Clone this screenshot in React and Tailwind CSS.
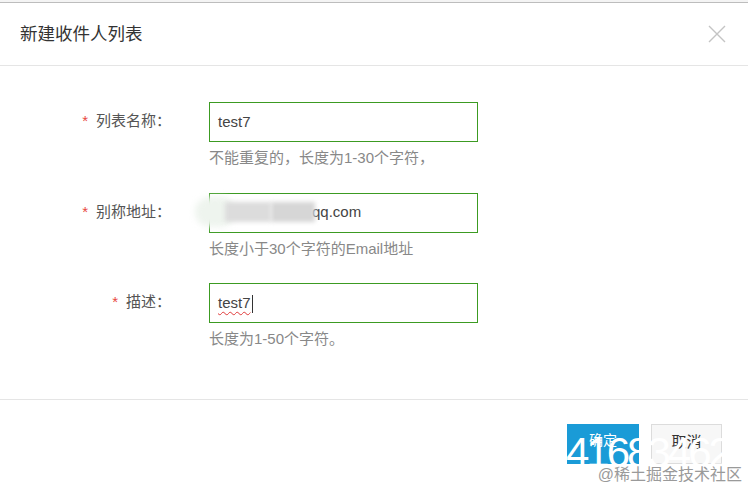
const fields = [
  { label: "列表名称：", value: "test7", help: "不能重复的，长度为1-30个字符，" },
  { label: "别称地址：", value: "qq.com", help: "长度小于30个字符的Email地址", blurred: true },
  { label: "描述：", value: "test7", help: "长度为1-50个字符。", spell: true },
];

const Field = ({ label, value, help, blurred, spell }) => {
  return (
    <div className="flex">
      <div className="w-[171px] shrink-0 pt-[8px] text-right text-[15px] text-[#555]">
        <span className="text-[#e8473f] mr-[8px]">*</span>
        {label}
      </div>
      <div className="ml-[38px] relative">
        <div className="w-[269px] h-[40px] border border-[#3c9b22] flex items-center pl-[8px] text-[15px] text-[#444]">
          {blurred ? (
            <span className="ml-[94px]">{value}</span>
          ) : spell ? (
            <span className="underline decoration-wavy decoration-[#e03a3a] decoration-1 underline-offset-[3px]">
              {value}
              <span className="inline-block w-px h-[18px] bg-[#333] align-middle ml-[1px]" />
            </span>
          ) : (
            <span>{value}</span>
          )}
        </div>
        {blurred && (
          <div className="absolute left-[-14px] top-[4px] flex items-center">
            <div className="w-[40px] h-[30px] rounded-full bg-[#eef4ee] blur-[3px]" />
            <div className="w-[46px] h-[20px] bg-[#dcdcdc] blur-[2px] -ml-[10px]" />
            <div className="w-[44px] h-[20px] bg-[#d6d6d6] blur-[2px]" />
          </div>
        )}
        <div className="mt-[5px] text-[15px] text-[#888]">{help}</div>
      </div>
    </div>
  );
};

export default function App() {
  return (
    <div
      className="w-[748px] h-[488px] bg-white relative overflow-hidden"
      style={{ fontFamily: '"Liberation Sans", "Noto Sans CJK SC", sans-serif' }}
    >
      <div className="h-[3px] border-b border-[#bdbdbd] bg-[#f4f4f4]" />
      <div className="h-[63px] border-b border-[#e5e5e5] flex items-center justify-between pl-[20px] pr-[22px]">
        <span className="text-[17.5px] text-[#333]">新建收件人列表</span>
        <svg width="18" height="18" viewBox="0 0 18 18" fill="none" stroke="#c4c4c4" strokeWidth="1.4">
          <path d="M1 1L17 17M17 1L1 17" />
        </svg>
      </div>
      <div className="pt-[36px] h-[334px] border-b border-[#e5e5e5] flex flex-col gap-[23px]">
        {fields.map((f) => (
          <Field key={f.label} {...f} />
        ))}
      </div>
      <div className="flex justify-end gap-[12px] pt-[24px] pr-[26px]">
        <button className="w-[72px] h-[40px] bg-[#1a9bd7] text-white text-[14px] pb-[8px]">确定</button>
        <button className="w-[71px] h-[40px] bg-[#f7f7f7] border border-[#dcdcdc] text-[#333] text-[15px] pb-[4px]">取消</button>
      </div>
      <div className="absolute left-[566px] top-[432px] text-[42px] font-light text-white leading-none tracking-[-3px]">
        41683462
      </div>
      <div className="absolute right-[6px] bottom-[5px] text-[16px] text-[#9a9a9a] leading-none">
        @稀土掘金技术社区
      </div>
    </div>
  );
}
